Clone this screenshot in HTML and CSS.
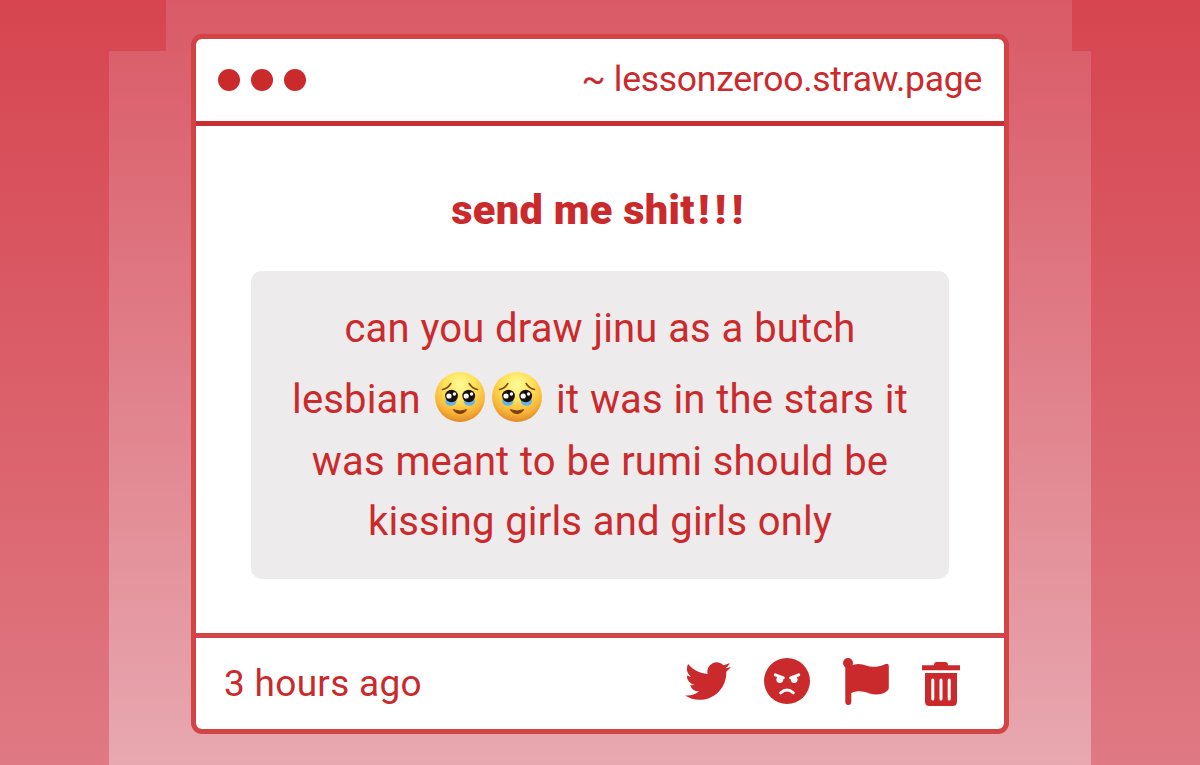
FILE: index.html
```
<!DOCTYPE html>
<html lang="en">
<head>
    <meta charset="UTF-8">
    <meta name="viewport" content="width=device-width, initial-scale=1.0">
    <title>lessonzeroo.straw.page</title>
    <link rel="stylesheet" href="styles.css">
</head>
<body>
    <!-- shared emoji artwork -->
    <svg class="defs" width="0" height="0" aria-hidden="true">
        <defs>
            <radialGradient id="face" cx="50%" cy="26%" r="76%">
                <stop offset="0" stop-color="#fffb9a"/>
                <stop offset="0.4" stop-color="#fee25a"/>
                <stop offset="0.75" stop-color="#f8b537"/>
                <stop offset="1" stop-color="#dd8526"/>
            </radialGradient>
            <symbol id="teary" viewBox="0 0 50 50">
                <circle cx="25" cy="25" r="25" fill="url(#face)"/>
                <ellipse cx="15.8" cy="29.3" rx="5.6" ry="4.500" fill="#62b4e6"/>
                <ellipse cx="34.4" cy="29.3" rx="5.6" ry="4.500" fill="#62b4e6"/>
                <ellipse cx="16.5" cy="24" rx="6.400" ry="6.200" fill="#17100c"/>
                <ellipse cx="33.7" cy="24" rx="6.400" ry="6.200" fill="#17100c"/>
                <circle cx="14" cy="24" r="2.600" fill="#fff"/>
                <circle cx="19.400" cy="22" r="1.700" fill="#fff"/>
                <circle cx="31.200" cy="24" r="2.600" fill="#fff"/>
                <circle cx="36.600" cy="22" r="1.700" fill="#fff"/>
                <path d="M7.500 17.500q5.500-1 8.300-6M34.200 11.500q2.800 5 8.300 6" fill="none" stroke="#7d4a14" stroke-width="1.600" stroke-linecap="round"/>
                <path d="M18.300 37.600q6.700 3 13.400 0-2 4-6.700 4t-6.700-4z" fill="#7d3f12" stroke="#7d3f12" stroke-linejoin="round"/>
            </symbol>
        </defs>
    </svg>

    <div class="page">
        <div class="window">
            <div class="window-bar">
                <div class="dots">
                    <span class="dot"></span>
                    <span class="dot"></span>
                    <span class="dot"></span>
                </div>
                <span class="site">~ lessonzeroo.straw.page</span>
            </div>

            <div class="content">
                <h1>send me shit<span class="bangs">!!!</span></h1>
                <p class="message">
                    can you draw jinu as a butch<br>
                    lesbian <svg class="emoji" role="img" aria-label="face holding back tears"><use href="#teary"/></svg><svg class="emoji" role="img" aria-label="face holding back tears"><use href="#teary"/></svg> it was in the stars it<br>
                    was meant to be rumi should be<br>
                    kissing girls and girls only
                </p>
            </div>

            <div class="window-footer">
                <span class="time">3 hours ago</span>
                <div class="actions">
                    <svg class="icon twitter" viewBox="0 0 24 24"><path d="M23.953 4.570a10 10 0 01-2.825.775 4.958 4.958 0 002.163-2.723c-.951.555-2.005.959-3.127 1.184a4.920 4.920 0 00-8.384 4.482C7.690 8.095 4.067 6.130 1.640 3.162a4.822 4.822 0 00-.666 2.475c0 1.710.870 3.213 2.188 4.096a4.904 4.904 0 01-2.228-.616v.060a4.923 4.923 0 003.946 4.827 4.996 4.996 0 01-2.212.085 4.936 4.936 0 004.604 3.417 9.867 9.867 0 01-6.102 2.105c-.390 0-.779-.023-1.170-.067a13.995 13.995 0 007.557 2.209c9.053 0 13.998-7.496 13.998-13.985 0-.210 0-.420-.015-.630A9.935 9.935 0 0024 4.590z"/></svg>
                    <svg class="icon angry" viewBox="0 0 46 46">
                        <circle cx="23" cy="23" r="23"/>
                        <path class="cut" d="M11.300 16.800l8 3M34.700 16.800l-8 3M16.700 34.800q6.300-5.600 12.600 0"/>
                        <circle class="eye" cx="15.800" cy="21.600" r="3.400"/>
                        <circle class="eye" cx="30.200" cy="21.600" r="3.400"/>
                    </svg>
                    <svg class="icon flag" viewBox="0 0 46 47">
                        <circle cx="5" cy="5" r="5"/>
                        <path d="M2.300 5h6v39a3 3 0 01-6 0z"/>
                        <path d="M8 7.500c5-2 10-2 15 0 6 2.300 12 1.600 19-1.300q3.800-1.200 3.800 1.800V30q0 2-2 3.200c-5 3.600-11 4.300-18 2C19 32.700 14 32.500 8 35z"/>
                    </svg>
                    <svg class="icon trash" viewBox="0 0 38 44">
                        <path d="M0 3.200h12Q12 0 14.500 0h9Q26 0 26 3.200h12v5H0z"/>
                        <path d="M3 11h32v28.500q0 4.500-4.500 4.500h-23Q3 44 3 39.500z"/>
                        <path class="cut" d="M10.800 18v19M19 18v19M27.200 18v19"/>
                    </svg>
                </div>
            </div>
        </div>
    </div>
</body>
</html>
```
FILE: styles.css
```
* {
    box-sizing: border-box;
}
body {
    margin: 0;
    font-family: Roboto, 'Liberation Sans', sans-serif;
    color: #cb2a2d;
    background: linear-gradient(#d64550, #df7983);
    height: 765px;
    overflow: hidden;
}
.defs {
    display: block;
}
.page {
    width: 982px;
    height: 765px;
    margin: 0 auto;
    padding: 34px 82px 0;
    background: linear-gradient(#d95a66, #e8a8b0);
    /* stepped shoulders at the top */
    clip-path: polygon(57px 0, 963px 0, 963px 51px, 982px 51px, 982px 100%, 0 100%, 0 51px, 57px 51px);
}
.window {
    display: flex;
    flex-direction: column;
    width: 818px;
    height: 700px;
    background-color: #fff;
    border: 5px solid #d24446;
    border-radius: 11px;
}
.window-bar {
    display: flex;
    justify-content: space-between;
    align-items: center;
    height: 87px;
    padding: 0 22px;
    border-bottom: 5px solid #c82e32;
}
.dots {
    display: flex;
    gap: 11px;
}
.dot {
    width: 22px;
    height: 22px;
    border-radius: 50%;
    background-color: #cb2a2d;
}
.site {
    font-size: 35.5px;
    line-height: 42px;
    letter-spacing: -0.27px;
    margin-top: -2px;
}
.content {
    flex-grow: 1;
    padding: 56px 55px 0;
}
h1 {
    margin: 0 0 33px;
    font-size: 41.5px;
    line-height: 56px;
    font-weight: 900;
    letter-spacing: 0.3px;
    text-align: center;
}
.bangs {
    margin-left: 3px;
    letter-spacing: 5.5px;
}
.message {
    margin: 0;
    height: 308px;
    padding: 28px 0 26px;
    border-radius: 11px;
    background-color: #edebec;
    font-size: 40px;
    line-height: 60px;
    letter-spacing: 0.15px;
    word-spacing: 0.6px;
    text-align: center;
    white-space: nowrap;
}
.emoji {
    width: 50px;
    height: 50px;
    margin: 13px 3.5px 10px;
    vertical-align: -19px;
}
.window-footer {
    display: flex;
    justify-content: space-between;
    align-items: center;
    height: 96px;
    padding: 0 44px 0 28px;
    border-top: 5px solid #d24446;
}
.time {
    font-size: 37px;
    letter-spacing: 0.3px;
}
.actions {
    display: flex;
    align-items: flex-end;
    gap: 33px;
    padding-bottom: 3px;
}
.icon {
    fill: #cb2a2d;
}
.twitter {
    width: 46px;
    height: 46px;
    margin-bottom: 2px;
}
.angry {
    width: 46px;
    height: 46px;
    margin-bottom: 2px;
}
.flag {
    width: 46px;
    height: 47px;
    margin-bottom: 1px;
}
.trash {
    width: 38px;
    height: 44px;
}
.cut {
    fill: none;
    stroke: #fff;
    stroke-width: 3;
    stroke-linecap: round;
}
.eye {
    fill: #fff;
}
```
